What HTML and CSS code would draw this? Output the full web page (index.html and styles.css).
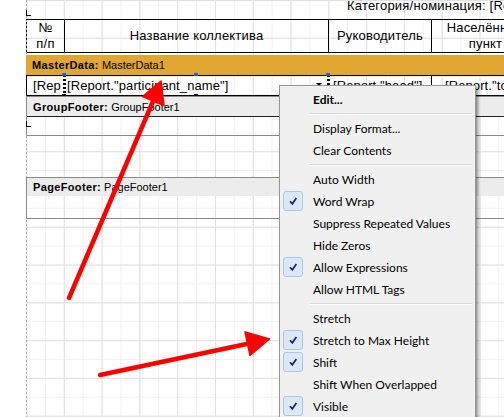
FILE: index.html
```html
<!DOCTYPE html>
<html lang="ru">
<head>
<meta charset="utf-8">
<title>Report designer</title>
<link rel="stylesheet" href="styles.css">
</head>
<body>
<div class="designer">
  <div class="sheet">
    <div class="title-band">
      <span class="title">Категория/номинация: [Report."category"]</span>
    </div>
    <div class="hdr-row">
      <div class="cell">№<br>п/п</div>
      <div class="cell">Название коллектива</div>
      <div class="cell">Руководитель</div>
      <div class="cell">Населённый<br>пункт</div>
    </div>
    <div class="band master">
      <div class="band-title"><b>MasterData:</b>&nbsp;MasterData1</div>
      <div class="data-row">
        <div class="cell c1">[Rep</div>
        <div class="cell c2">[Report."participant_name"]</div>
        <div class="cell c3">[Report."head"]</div>
        <div class="cell c4">[Report."town"]</div>
        <span class="sel-line l1"></span>
        <span class="sel-line l2"></span>
        <span class="handle top h1"></span>
        <span class="handle top h2"></span>
        <span class="handle top h3"></span>
        <span class="handle bottom h1"></span>
        <span class="handle bottom h2"></span>
        <span class="smart-tag"></span>
      </div>
    </div>
    <div class="band gfooter">
      <div class="band-title"><b>GroupFooter:</b>&nbsp;GroupFooter1</div>
      <div class="band-body"></div>
    </div>
    <div class="band pfooter">
      <div class="band-title"><b>PageFooter:</b>&nbsp;PageFooter1</div>
      <div class="band-body"></div>
    </div>
  </div>

  <div class="menu">
    <div class="item bold"><span class="chk"></span><span class="label">Edit...</span></div>
    <div class="sep"></div>
    <div class="item"><span class="chk"></span><span class="label">Display Format...</span></div>
    <div class="item"><span class="chk"></span><span class="label">Clear Contents</span></div>
    <div class="sep"></div>
    <div class="item"><span class="chk"></span><span class="label">Auto Width</span></div>
    <div class="item"><span class="chk on"><svg viewBox="0 0 10 10"><path d="M2 5.2 L4.3 7.8 L8.4 2"/></svg></span><span class="label">Word Wrap</span></div>
    <div class="item"><span class="chk"></span><span class="label">Suppress Repeated Values</span></div>
    <div class="item"><span class="chk"></span><span class="label">Hide Zeros</span></div>
    <div class="item"><span class="chk on"><svg viewBox="0 0 10 10"><path d="M2 5.2 L4.3 7.8 L8.4 2"/></svg></span><span class="label">Allow Expressions</span></div>
    <div class="item"><span class="chk"></span><span class="label">Allow HTML Tags</span></div>
    <div class="sep"></div>
    <div class="item"><span class="chk"></span><span class="label">Stretch</span></div>
    <div class="item"><span class="chk on"><svg viewBox="0 0 10 10"><path d="M2 5.2 L4.3 7.8 L8.4 2"/></svg></span><span class="label">Stretch to Max Height</span></div>
    <div class="item"><span class="chk on"><svg viewBox="0 0 10 10"><path d="M2 5.2 L4.3 7.8 L8.4 2"/></svg></span><span class="label">Shift</span></div>
    <div class="item"><span class="chk"></span><span class="label">Shift When Overlapped</span></div>
    <div class="item"><span class="chk on"><svg viewBox="0 0 10 10"><path d="M2 5.2 L4.3 7.8 L8.4 2"/></svg></span><span class="label">Visible</span></div>
  </div>

  <svg class="arrows" width="504" height="417" viewBox="0 0 504 417">
    <line x1="69" y1="298" x2="154" y2="99" />
    <polygon points="161,81 164,105.5 142.5,96.5" />
    <line x1="100" y1="375" x2="249" y2="343.5" />
    <polygon points="269.5,339 250,355.5 245,332" />
  </svg>
</div>
</body>
</html>
```

FILE: styles.css
```css
* { box-sizing: border-box; }
html, body { margin: 0; padding: 0; }
body {
  width: 504px;
  height: 417px;
  overflow: hidden;
  background: #fff;
  font-family: "Liberation Sans", Arial, sans-serif;
  color: #000;
}
.designer {
  position: relative;
  width: 504px;
  height: 417px;
  overflow: hidden;
}
.sheet {
  position: relative;
  margin-left: 26px;
  width: 520px;
  height: 417px;
  display: flex;
  flex-direction: column;
  background-color: #fff;
  background-image:
    linear-gradient(to right, #e1e1e1 1px, transparent 1px),
    linear-gradient(to bottom, #e1e1e1 1px, transparent 1px),
    linear-gradient(to right, #f1f1f1 1px, transparent 1px),
    linear-gradient(to bottom, #f1f1f1 1px, transparent 1px);
  background-size: 37.8px 37.8px, 37.8px 37.8px, 18.9px 18.9px, 18.9px 18.9px;
}
.sheet::before {
  content: "";
  position: absolute;
  left: 0;
  top: 0;
  bottom: 0;
  width: 1px;
  background: repeating-linear-gradient(to bottom, #a6a6a6 0 2px, transparent 2px 4px);
}

/* title band */
.title-band {
  position: relative;
  height: 19px;
  padding-left: 321px;
}
.title-band::after {
  content: "";
  position: absolute;
  left: 0;
  top: 10px;
  width: 4px;
  height: 5px;
  border-left: 1px solid #000;
  border-bottom: 1px solid #000;
}
.title {
  display: block;
  font-size: 13px;
  line-height: 11px;
  letter-spacing: 0.2px;
  white-space: nowrap;
}

/* table header */
.hdr-row {
  display: grid;
  grid-template-columns: 38px 264px 103px 108px;
  height: 34px;
  border-top: 1px solid #000;
  border-bottom: 1px solid #000;
  margin-bottom: 2px;
}
.hdr-row .cell {
  border-left: 1px solid #000;
  display: flex;
  align-items: center;
  justify-content: center;
  text-align: center;
  font-size: 13px;
  line-height: 16px;
  letter-spacing: 0.2px;
  white-space: nowrap;
}

/* bands */
.band { position: relative; }
.band-title {
  display: flex;
  align-items: center;
  padding-left: 6px;
  font-size: 11px;
  white-space: nowrap;
  background: #ececec;
  height: 19px;
}
.band-title b { letter-spacing: 0.35px; }
.master .band-title {
  background: #dfa731;
  height: 20px;
}
.data-row {
  position: relative;
  display: grid;
  grid-template-columns: 38px 264px 103px 108px;
  height: 21px;
  border-top: 1px solid #000;
  border-bottom: 1px solid #000;
}
.data-row .cell {
  border-left: 1px solid #000;
  font-size: 13px;
  line-height: 19px;
  letter-spacing: 0.1px;
  white-space: nowrap;
  overflow: hidden;
}
.data-row .c1 { padding-left: 6px; }
.data-row .c2 { padding-left: 2px; }
.data-row .c3 { padding-left: 4px; }
.data-row .c4 { padding-left: 13px; }

.sel-line {
  position: absolute;
  top: -1px;
  height: 21px;
  width: 3px;
  background: repeating-linear-gradient(to bottom, #000 0 2px, #fff 2px 4px);
}
.sel-line.l1 { left: 37px; }
.sel-line.l2 { left: 301px; }
.handle {
  position: absolute;
  width: 4px;
  height: 3px;
}
.handle.top { top: -3px; background: #2b5fc4; }
.handle.bottom { top: 18px; background: #000; }
.handle.h1 { left: 36px; }
.handle.h2 { left: 168px; }
.handle.h3 { left: 300px; }
.smart-tag {
  position: absolute;
  left: 290px;
  top: 7px;
  width: 0;
  height: 0;
  border-left: 3px solid transparent;
  border-right: 3px solid transparent;
  border-top: 3px solid #000;
}

.gfooter {
  border: 1px solid #8a8a8a;
  border-right: none;
}
.gfooter .band-body {
  position: relative;
  height: 19px;
  border-top: 1px solid #222;
}
.gfooter .band-body::after {
  content: "";
  position: absolute;
  left: -1px;
  top: 4px;
  width: 4px;
  height: 5px;
  border-left: 1px solid #000;
  border-bottom: 1px solid #000;
}
.pfooter {
  margin-top: 41px;
  border: 1px solid #8a8a8a;
  border-right: none;
}
.pfooter .band-title { height: 18px; }
.pfooter .band-body { height: 22px; }

/* context menu */
.menu {
  position: absolute;
  left: 279px;
  top: 85px;
  width: 197px;
  padding: 2px;
  background: #f0f0f0;
  border: 1px solid #979797;
  box-shadow: 2px 2px 3px rgba(0, 0, 0, 0.45);
  font-family: Lato, "Open Sans", sans-serif;
  font-size: 12px;
  color: #000;
  z-index: 5;
}
.item {
  display: flex;
  align-items: center;
  height: 22px;
  padding-left: 1px;
  white-space: nowrap;
}
.item.bold { font-weight: bold; }
.chk {
  flex: none;
  width: 20px;
  height: 20px;
  margin-right: 10px;
  display: flex;
  align-items: center;
  justify-content: center;
}
.chk.on {
  background: #dce8f7;
  border: 1px solid #a9c6ea;
  border-radius: 3px;
}
.chk svg {
  width: 10px;
  height: 10px;
  fill: none;
  stroke: #1d1d7e;
  stroke-width: 1.7;
}
.sep {
  height: 7px;
  margin-left: 28px;
  margin-right: 1px;
  display: flex;
  flex-direction: column;
  justify-content: center;
}
.sep::before {
  content: "";
  display: block;
  height: 1px;
  background: #d7d7d7;
  border-bottom: 1px solid #fff;
  box-sizing: content-box;
}

/* annotation arrows */
.arrows {
  position: absolute;
  left: 0;
  top: 0;
  z-index: 10;
}
.arrows line {
  stroke: #ff0000;
  stroke-width: 4.5;
  stroke-linecap: round;
}
.arrows polygon {
  fill: #ff0000;
  stroke: #ff0000;
  stroke-width: 1.5;
  stroke-linejoin: round;
}
```
